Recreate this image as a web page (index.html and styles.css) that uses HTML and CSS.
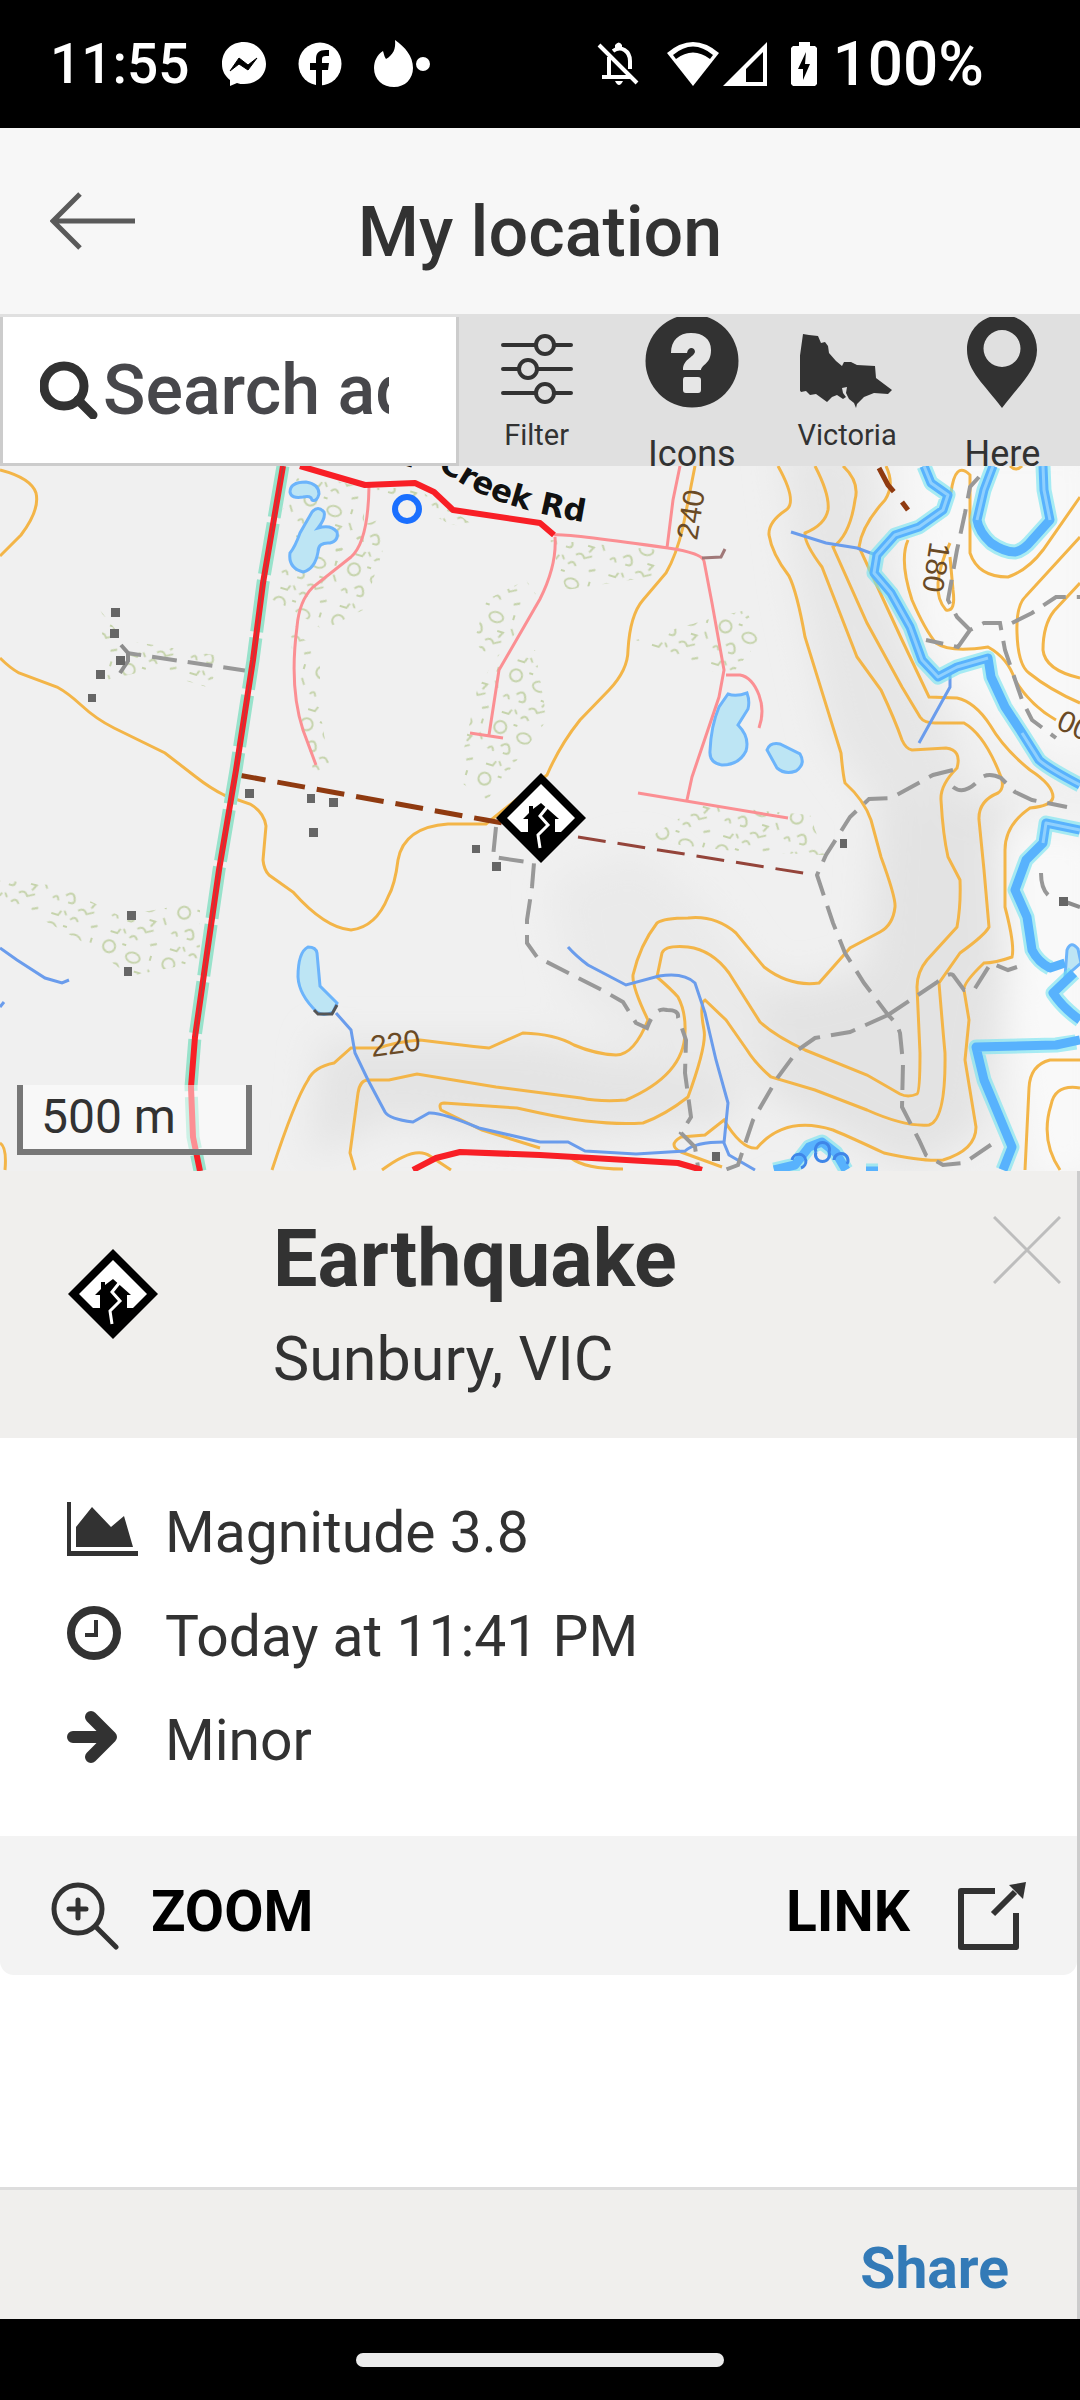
FILE: index.html
```html
<!DOCTYPE html>
<html lang="en">
<head>
  <meta charset="UTF-8" />
  <meta name="viewport" content="width=device-width, initial-scale=1" />
  <title>My location</title>
  <link rel="stylesheet" href="styles.css">
</head>
<body>

  <div class="statusbar">
    <div class="status-left">
      <span class="clock">11:55</span>
      <svg width="44" height="44" viewBox="0 0 44 44" aria-hidden="true">
        <path d="M22 0C9 0 0 9 0 22c0 7 3 12 8 16v6l7-3c2 1 5 1 7 1 13 0 22-9 22-20S35 0 22 0z" fill="#fff"/>
        <path d="M8 29l9-13 9 7 9-7-9 12-9-6z" fill="#000" stroke="#000" stroke-width="1" stroke-linejoin="round"/>
      </svg>
      <svg width="44" height="44" viewBox="0 0 44 44" aria-hidden="true">
        <circle cx="22" cy="22" r="21.500" fill="#fff"/>
        <path d="M18 44V28h-6v-7h6v-4c0-6 3-9 10-9h3v6h-3c-3 0-4 1-4 3v4h7l-1 7h-6v16z" fill="#000"/>
      </svg>
      <svg width="58" height="48" viewBox="0 0 58 48" aria-hidden="true">
        <path d="M21 0c10 7 18 16 18 28 0 11-8 19-19 19S0 40 0 28c0-7 3-13 9-17 1 3 1 5 3 8 7-4 10-10 9-19z" fill="#fff"/>
        <circle cx="49" cy="24" r="7" fill="#fff"/>
      </svg>
    </div>
    <div class="status-right">
      <svg class="bell" width="42" height="44" viewBox="0 0 42 44" aria-hidden="true">
        <g fill="none" stroke="#fff" stroke-width="4">
          <path d="M12 15v18M5 35h28M16 9c8-6 17 0 17 10v8M2 3l38 38"/>
        </g>
        <path d="M18 8V3q4-5 7 0v5zM18 39h8q-4 8-8 0z" fill="#fff"/>
      </svg>
      <svg width="52" height="44" viewBox="0 0 52 44" aria-hidden="true">
        <path d="M0 11Q26-11 52 11L26 44z" fill="#fff"/>
        <path d="M6 13Q26-4 46 13l-3 4Q26 4 9 17z" fill="#000"/>
      </svg>
      <svg width="44" height="44" viewBox="0 0 44 44" aria-hidden="true">
        <path d="M44 0v44H0zM40 10L23 27v13h17z" fill="#fff" fill-rule="evenodd"/>
      </svg>
      <svg class="battery" width="26" height="44" viewBox="0 0 26 44" aria-hidden="true">
        <path d="M8 0h11v4h5l2 2v36l-2 2H2l-2-2V6l2-2h6z" fill="#fff"/>
        <path d="M15 10L7 27h5v11l7-16h-5z" fill="#000"/>
      </svg>
      <span class="charge">100%</span>
    </div>
  </div>

  <header class="header">
    <button type="button" class="back" aria-label="Back">
      <svg width="86" height="58" viewBox="0 0 86 58"><path d="M30 2L3 29l27 27M3 29h82" fill="none" stroke="#5a5a5a" stroke-width="5"/></svg>
    </button>
    <h1>My location</h1>
  </header>

  <div class="toolbar">
    <form class="search">
      <label for="address" aria-label="Search address">
        <svg width="58" height="58" viewBox="0 0 58 58"><circle cx="24" cy="25" r="20" fill="none" stroke="#323232" stroke-width="9"/><path d="M38 39l15 15" stroke="#323232" stroke-width="9" stroke-linecap="round"/></svg>
      </label>
      <input type="text" id="address" placeholder="Search address">
    </form>
    <nav class="tools">
      <button type="button" class="tool small">
        <svg width="72" height="74" viewBox="0 0 72 74">
          <g fill="none" stroke="#323232" stroke-width="4" stroke-linecap="round">
            <path d="M2 11h33M54 11h16M2 35h15M36 35h34M2 59h33M54 59h16"/>
            <circle cx="44" cy="11" r="9"/><circle cx="27" cy="35" r="9"/><circle cx="44" cy="59" r="9"/>
          </g>
        </svg>
        <span>Filter</span>
      </button>
      <button type="button" class="tool">
        <svg width="94" height="91" viewBox="0 3 94 91">
          <circle cx="47" cy="47" r="46.500" fill="#323232"/>
          <path d="M26 39c0-13 8-20 20-20s20 6 20 17c0 14-9 14-10 20H38c0-11 10-12 12-18 0-5-7-6-8 1zM40 63h13q3 0 3 3v10q0 3-3 3H41q-3 0-3-3V66q0-3 2-3z" fill="#e6e6e6"/>
        </svg>
        <span>Icons</span>
      </button>
      <button type="button" class="tool small">
        <svg width="94" height="74" viewBox="0 0 94 74">
          <path d="M3 0l6 1 9 1 3 7 4-1 3 4 1 7 7 8 6 5 2-4h7l6 3 18 1 1 12 8 6 8 6-4 4-14-1-10 4-7 7-1 4-2-5-5-4-3-6 1-6-5 1 1 5 3 4-3 2-6-4-5 2-5 5-11-8-6 1-4-4-5 1-5-8z" fill="#323232"/>
        </svg>
        <span>Victoria</span>
      </button>
      <button type="button" class="tool">
        <svg width="70" height="91" viewBox="0 2 70 91">
          <path d="M35 0C15 0 0 15 0 35c0 21 18 35 35 58 17-23 35-37 35-58C70 15 55 0 35 0zm0 15a18 18 0 1 1 0 37 18 18 0 0 1 0-37z" fill="#323232" fill-rule="evenodd"/>
        </svg>
        <span>Here</span>
      </button>
    </nav>
  </div>

  <main class="map">
    <svg class="tiles" viewBox="0 466 1080 705" preserveAspectRatio="xMidYMid slice" role="img" aria-label="Map of the area around Sunbury">
      <defs>
        <filter id="soft" x="-20%" y="-20%" width="140%" height="140%"><feGaussianBlur stdDeviation="18"/></filter>
        <pattern id="scrub" width="62" height="54" patternUnits="userSpaceOnUse" patternTransform="rotate(17)">
          <g fill="none" stroke="#c5d3ab" stroke-width="2">
            <circle cx="9" cy="9" r="6"/>
            <ellipse cx="35" cy="13" rx="7" ry="5"/>
            <path d="M15 27q6-7 9 0t-5 6M40 26h6l-3 6M3 33q4-6 6 1M31 38q5-5 9 1l7-4M21 3h4M52 6v5M6 48h7l2-5M26 49q4-6 8 0M48 50l6-3M53 20l4 6M18 42l3 4"/>
          </g>
        </pattern>
        <path id="creekRoad" d="M306 446Q415 452 456 480T584 522"/>
        <!-- house and crack warning diamond, 90 x 90 -->
        <symbol id="quake" viewBox="0 0 90 90">
          <path d="M45 0l45 45-45 45L0 45z" fill="#000"/>
          <path d="M45 11l34 34-14 14H25L11 45z" fill="#fff"/>
          <path d="M27 46l6-6v-7h4v3l8-6 18 16h-4v13H32V46z" fill="#000"/>
          <path d="M52 33l-8 10 8 9-10 10 2 13" fill="none" stroke="#fff" stroke-width="3"/>
        </symbol>
      </defs>

      <rect x="0" y="466" width="1080" height="705" fill="#f0f0f0"/>

      <!-- hill shading -->
      <g filter="url(#soft)">
        <path d="M780 440h90l10 130 70 160 20 70-80 20-60-80-30-150z" fill="#e6e6e6"/>
        <path d="M880 800h130v160l-30 170-70 40-150-80-60-140 90 40 80-20z" fill="#e3e3e3"/>
        <path d="M320 1040l220 0 100 20 90-20 10 80-200 20-150-20-80 40z" fill="#e4e4e4"/>
        <path d="M550 880l90-30 70 60 50 70 10 100-110-10-90-80z" fill="#eaeaea"/>
        <path d="M900 440h200v330l-90-30-90-90z" fill="#f8f8f8"/>
        <path d="M1000 830h100v350h-70l-20-160z" fill="#f9f9f9"/>
      </g>

      <!-- scrub -->
      <g fill="url(#scrub)">
        <path d="M300 472l65 16 50 0 40 24 25 18-30-6-60-30-26 6 0 50-30 14-58-40z"/>
        <path d="M270 570l48-30 60-20 5 30-20 60-40 20-30-20-28-14z"/>
        <path d="M486 600l40-20 14 20-46 62-20-20z"/>
        <path d="M495 660l40-10 12 70-60 80-30-20 20-90z"/>
        <path d="M550 540l110 10-4 26-90 14z"/>
        <path d="M636 640l70-20 40-10 14 30-30 36-44-12z"/>
        <path d="M100 610l24 30 96 16-10 32-60-18-44 10z"/>
        <path d="M0 880l60 6 60 30 80-14 0 60-70 14-40-30-90-50z"/>
        <path d="M700 805l110 10 14 40-90-4-90-10z"/>
        <path d="M290 630l30 20 0 60 10 60-16 4-18-80z"/>
      </g>

      <!-- contours -->
      <g class="contour">
        <path d="M0 470Q31 478 36 493 40 510 21 535L0 556"/>
        <path d="M0 658Q10 668 19 673L57 687Q68 693 81 705 96 719 114 728L165 753 196 777Q210 788 224 795L250 804Q264 812 266 826L263 860Q264 870 269 875L293 892Q325 928 351 930 376 927 388 897 395 885 398 860 404 827 448 824H486L547 775Q560 745 580 720L609 690Q628 670 628 650 630 615 643 600L666 573Q676 556 683 527L695 466"/>
        <path d="M778 466Q798 502 786 510 768 522 769 535 772 554 789 576 797 592 805 637L841 753Q843 775 845 783 864 800 871 820L881 857Q896 898 895 907 893 925 880 932L850 948 819 983Q790 987 764 967L736 933Q715 915 688 918 664 918 657 923 640 945 633 975 632 987 648 1020 634 1055 616 1055 595 1054 574 1045 555 1034 523 1033L489 1048Q460 1045 420 1040 395 1042 379 1048H351L334 1063Q314 1067 308 1080 295 1100 272 1170"/>
        <path d="M815 466Q830 495 828 510 825 525 805 533 804 543 822 567L857 657 881 690Q895 720 902 740 906 749 912 750L946 748Q962 750 957 768 940 785 941 800 943 835 948 857L960 880Q961 905 957 927L927 960Q917 972 917 987L920 1053Q920 1092 917 1094 908 1098 900 1094L867 1075 805 1050Q775 1036 760 1022L729 973Q712 950 688 947 665 945 662 953L657 977Q672 990 678 997 686 1012 685 1033 684 1075 626 1100 600 1102 581 1098L496 1087 417 1074 389 1080H368Q360 1080 358 1093L350 1153 355 1170"/>
        <path d="M843 466Q860 482 855 500 850 535 833 547L867 623 902 687 920 717Q924 723 935 723H964Q985 735 1001 777 1005 788 998 793 978 801 979 820L984 870 989 927Q985 935 960 953L939 983Q942 1020 945 1053 946 1120 929 1125 905 1127 867 1110L815 1090 771 1077Q755 1063 747 1050L726 1020 705 1000Q699 1003 704 1030 707 1045 688 1097 665 1115 643 1123 600 1126 540 1113L517 1108 444 1103Q438 1103 441 1110L482 1130 540 1148"/>
        <path d="M886 466Q895 485 885 500 862 525 859 547L902 640 929 697 957 698Q975 702 990 725 1004 749 1030 770 1053 785 1053 797 1052 806 1030 808 1005 825 1005 850V907Q1015 945 1012 957 995 963 984 963 963 983 964 990L969 1020 965 1060 976 1127Q976 1150 943 1160 925 1162 884 1153 850 1137 833 1130 785 1115 757 1148 742 1150 724 1120L705 1135 681 1137Q667 1145 681 1152L722 1167"/>
        <path d="M908 540Q899 560 912 600 925 630 936 643 950 653 988 647 1008 658 1015 680 1030 705 1056 720"/>
        <path d="M950 543Q928 590 946 610 956 612 953 590L950 557"/>
        <path d="M951 493Q955 460 970 475V553Q978 577 1008 577 1028 570 1043 550L1080 497"/>
        <path d="M1080 537L1026 596Q1016 605 1017 633 1018 665 1029 673 1050 690 1080 703"/>
        <path d="M1080 583L1054 611Q1043 625 1043 650 1045 670 1080 678"/>
        <path d="M1080 1060H1050Q1030 1065 1029 1088L1025 1170M1080 1088Q1055 1084 1051 1105 1040 1140 1060 1170M0 1143Q7 1147 5 1170M382 1170Q415 1145 430 1156L451 1170M571 1158Q585 1169 623 1169M1010 466q6 6 12 0"/>
      </g>

      <!-- lakes and streams -->
      <g class="lake">
        <path d="M290 492Q290 482 306 482 319 484 319 494 317 502 312 500 311 495 303 497 291 499 290 492z"/>
        <path d="M312 512Q318 505 324 512 326 518 318 528 331 524 337 532 339 541 330 543 318 542 318 552 315 569 303 572 288 568 290 553 295 547 300 533z"/>
        <path d="M728 694q8 3 19-1 3 8 1 16l-10 16q12 12 8 26-7 14-24 14-13-2-12-14 1-25 9-44z"/>
        <path d="M767 750q3-8 13-6l20 10q6 10-4 17-11 4-19-3z"/>
        <path d="M308 947q8 0 9 6l3 33 17 17-4 9q-10 5-16 0-18-17-19-35 0-25 10-30z"/>
        <path d="M1067 950q4-10 11-1l3 14-16 14z"/>
      </g>
      <path d="M314 1010l4 4h14l5-9" fill="none" stroke="#555" stroke-width="3"/>
      <g class="stream">
        <path d="M336 1013l15 17 4 23 13 27 17 32q4 7 28 10l16-9q12-1 50 15l61 14h28l17 9 51 3 49-3q10-9 39-9"/>
        <path d="M568 947q8 9 20 18l38 20 33-9q25-4 36 7l10 30 11 47 12 43-4 40 5 12 26 15"/>
        <path d="M0 948l17 12 28 18 17 5 7-3M0 1007l4-5M791 532l35 11 31 5 19 7M950 670v17l-31 56"/>
      </g>

      <!-- river -->
      <g class="river">
        <g class="bank">
          <path d="M924 466l7 17 17 12-5 15-24 17-24 8-18 20-3 18 17 20 19 34 12 33 16 17 19-10 31-9 3 19 14 30 17 26 17 27q10 9 41 25M993 466l-9 24-7 30q2 12 14 23 13 9 24 9 9-2 17-12l18-20-6-30-1-24"/>
          <path d="M1080 830l-34-7-3 20-17 17-11 30 12 27 5 33q6 12 18 18M1074 973l-21 20q10 15 27 27M1076 1042l-20 3-80 2 8 33 28 67-9 23M774 1170l21-5 14-18 13-5 14 11 10 17M866 1171h12"/>
        </g>
        <g class="water">
          <path d="M924 466l7 17 17 12-5 15-24 17-24 8-18 20-3 18 17 20 19 34 12 33 16 17 19-10 31-9 3 19 14 30 17 26 17 27q10 9 41 25M993 466l-9 24-7 30q2 12 14 23 13 9 24 9 9-2 17-12l18-20-6-30-1-24"/>
          <path d="M1080 830l-34-7-3 20-17 17-11 30 12 27 5 33q6 12 18 18l15-5M1074 973l-21 20q10 15 27 27M1080 1040l-24 5-80 2 8 33 28 67-9 23M774 1170l21-5 14-18 13-5 14 11 10 17M866 1171h12"/>
        </g>
        <path class="ripple" d="M924 466l7 17 17 12-5 15-24 17-24 8-18 20-3 18 17 20 19 34 12 33 16 17 19-10 31-9M1022 733l17 27q10 9 41 25M993 466l-9 24-7 30M1050 520l-6-30-1-24M1080 830l-34-7-3 20"/>
        <path class="pool" d="M792 1160a7 7 0 1 1 9 8M816 1152a7 7 0 1 1 13 0 7 7 0 1 1-13 0M834 1160a7 7 0 1 1 13 4"/>
      </g>

      <!-- walking tracks -->
      <g class="track">
        <path d="M248 671l-121-18"/>
        <path d="M496 827l-3 30 41 6-2 24-5 33v23l10 14 65 33 21 12 13 21 11 5q8-22 20-18 12 0 11 7l8 23-1 33 6 44-10 16 14 14 3 20"/>
        <path d="M953 770l-20 5-42 23-22 1-19 18-24 38-9 20 16 48 12 30 19 30 24 32q9 8 12 18l3 30-1 44 17 33 7 15 17 10 21-2 31-21"/>
        <path d="M888 1015l48-32q12-11 17-8l11 15h10l17-27 17 7 9-3M888 1015l-38 17-35 6-17 12-20 27-25 43-10 30-5 15-16 6"/>
        <path d="M979 477l-9 10-5 26-8 37-9 50 9 17 13 13 14-7h16l5 27 17 50 10 20 24 18M970 630l-12 17-32-7M1012 623l20-10 24-16h24"/>
        <path d="M953 787q10 8 23-4 9-13 25-5l14 14 17 8 35 7M1041 873q0 15 7 22"/>
      </g>
      <path d="M121 645l7 8v8l-8 12M1063 901l17 6" fill="none" stroke="#8c8c8c" stroke-width="4"/>
      <g class="dirt">
        <path d="M238 775l248 45 55 10"/>
        <path class="thin" d="M578 837l231 37"/>
        <path d="M879 468l9 17 7 8M902 502l6 8"/>
      </g>

      <!-- roads -->
      <g class="lane">
        <path d="M554 535q8-2 114 13 34 5 36 13l8 42 12 67-5 27-27 80-5 23M638 793l150 25M726 675h14q12 2 19 20 6 16 0 33M667 548l6-48 7-34"/>
        <path d="M555 537q2 28-15 62l-41 71-10 65M470 733l33 5M369 487q-1 55-18 70l-38 30q-14 14-16 40-8 60 6 103l13 35"/>
      </g>
      <path d="M702 558l19-1 4-8" fill="none" stroke="#a07878" stroke-width="3"/>
      <path d="M283 466l-20 117-10 77-17 110-17 100-12 83-12 84-4 50 2 50 7 34" fill="none" stroke="#98e2cb" stroke-width="13" stroke-dasharray="52 6"/>
      <g class="road">
        <path d="M283 466l-20 117-10 77-17 110-17 100-12 83-12 84-4 50 2 50 7 34"/>
        <path d="M300 466l65 19 50-2 19 9 19 18 87 13 14 12M413 1170l23-12 24-6 80 3 138 8 24 7"/>
      </g>
      <path d="M283 466l-20 117-10 77-17 110-17 100-12 83-12 84" fill="none" stroke="#9c4a4a" stroke-width="1"/>
      <circle cx="407" cy="509" r="12" fill="#f0f0f0" stroke="#1a6fff" stroke-width="6"/>

      <!-- buildings -->
      <path class="building" d="M111 608h9v9h-9zM110 629h9v9h-9zM116 656h9v9h-9zM96 670h9v9h-9zM88 694h8v8h-8zM245 789h9v9h-9zM307 794h8v9h-8zM329 798h9v9h-9zM309 828h9v9h-9zM472 845h8v8h-8zM492 862h9v9h-9zM127 911h9v9h-9zM124 967h8v9h-8zM840 839h7v9h-7zM712 1152h8v9h-8zM1059 897h9v9h-9z"/>

      <text class="road-name"><textPath href="#creekRoad" startOffset="100%">Deep Creek Rd</textPath></text>
      <g class="height">
        <text x="0" y="0" transform="translate(697 541) rotate(-81)">240</text>
        <text x="0" y="0" transform="translate(930 541) rotate(99)">180</text>
        <text x="0" y="0" transform="translate(372 1057) rotate(-8)">220</text>
        <text x="0" y="0" transform="translate(1055 728) rotate(24)">00</text>
      </g>

      <use href="#quake" x="496" y="773" width="90" height="90"/>
    </svg>
    <div class="scale">500 m</div>
  </main>

  <section class="panel">
    <div class="panel-head">
      <svg class="panel-icon" width="90" height="90" aria-hidden="true"><use href="#quake"/></svg>
      <div class="panel-title">
        <h2>Earthquake</h2>
        <p>Sunbury, VIC</p>
      </div>
      <button type="button" class="close" aria-label="Close">
        <svg width="68" height="68" viewBox="0 0 68 68"><path d="M1 1l66 66M67 1L1 67" stroke="#bdbdbd" stroke-width="3"/></svg>
      </button>
    </div>

    <ul class="details">
      <li>
        <svg width="71" height="54" viewBox="0 0 71 54" aria-hidden="true"><path d="M0 0h4v49h67v5H0zM9 25L25 5l19 20 13-11 9 31H9z" fill="#323232"/></svg>
        Magnitude 3.8
      </li>
      <li>
        <svg width="54" height="54" viewBox="0 0 54 54" aria-hidden="true"><circle cx="27" cy="27" r="23" fill="none" stroke="#323232" stroke-width="8"/><path d="M29 14v15H18" fill="none" stroke="#323232" stroke-width="4"/></svg>
        Today at 11:41 PM
      </li>
      <li>
        <svg width="54" height="54" viewBox="0 0 54 54" aria-hidden="true"><path d="M6 27h34M24 7l20 20-20 20" fill="none" stroke="#323232" stroke-width="12" stroke-linecap="round" stroke-linejoin="round"/></svg>
        Minor
      </li>
    </ul>

    <div class="actions">
      <button type="button">
        <svg width="68" height="68" viewBox="0 0 68 68"><g fill="none" stroke="#323232" stroke-width="5" stroke-linecap="round"><circle cx="27" cy="27" r="24"/><path d="M45 45l20 20M18 27h17M27 18v18"/></g></svg>
        ZOOM
      </button>
      <a href="#link">
        LINK
        <svg width="68" height="68" viewBox="0 0 68 68"><path d="M37 9H3v56h55V31" fill="none" stroke="#323232" stroke-width="6" stroke-linejoin="round"/><path d="M35 32l22-22" stroke="#323232" stroke-width="6"/><path d="M51 3l17-3-3 17z" fill="#323232"/></svg>
      </a>
    </div>

    <footer class="panel-foot">
      <a href="#share">Share</a>
    </footer>
  </section>

  <div class="navbar"><span></span></div>

</body>
</html>
```

FILE: styles.css
```css
* {
  box-sizing: border-box;
}

body {
  margin: 0;
  min-height: 100vh;
  display: flex;
  flex-direction: column;
  background-color: #fff;
  font-family: Roboto, 'Liberation Sans', sans-serif;
  color: #323232;
}

h1, h2, p, ul {
  margin: 0;
  padding: 0;
}

svg {
  display: block;
  flex: none;
}

button {
  padding: 0;
  border: none;
  background: none;
  font: inherit;
  color: inherit;
  cursor: pointer;
}

a {
  text-decoration: none;
}

/* phone status bar */
.statusbar {
  display: flex;
  justify-content: space-between;
  align-items: center;
  height: 128px;
  padding: 0 96px 0 50px;
  background-color: #000;
  color: #fff;
}

.status-left,
.status-right {
  display: flex;
  align-items: center;
  font-weight: 500;
  line-height: 64px;
}

.status-left {
  gap: 32px;
}

.status-right {
  gap: 4px;
}

.clock {
  font-size: 55px;
}

.charge {
  font-size: 62px;
}

.bell {
  margin-right: 24px;
}

.battery {
  margin: 0 12px 0 20px;
}

/* header */
.header {
  display: grid;
  grid-template-columns: 136px 1fr 136px;
  align-items: center;
  height: 189px;
  border-bottom: 3px solid #e0e0e0;
  background-color: #f7f7f7;
}

.back {
  justify-self: end;
}

.header h1 {
  padding-top: 22px;
  font-size: 70px;
  font-weight: 500;
  line-height: 80px;
  text-align: center;
}

/* search and tools */
.toolbar {
  display: flex;
  height: 149px;
  background-color: #e0e0e0;
}

.search {
  display: flex;
  align-items: center;
  gap: 5px;
  width: 459px;
  padding: 0 67px 0 37px;
  border: 3px solid #ccc;
  border-top: none;
  background-color: #fff;
}

.search input {
  flex: 1;
  min-width: 0;
  padding: 0;
  border: none;
  outline: none;
  background: none;
  font: 500 70px Roboto, 'Liberation Sans', sans-serif;
  color: #47474b;
}

.search input::placeholder {
  color: #47474b;
  opacity: 1;
}

.tools {
  flex: 1;
  display: grid;
  grid-template-columns: repeat(4, 1fr);
  align-items: start;
}

.tool {
  display: flex;
  flex-direction: column;
  align-items: center;
  gap: 31px;
  font-size: 36px;
  line-height: 30px;
}

.tool.small {
  gap: 12px;
  padding-top: 17px;
  font-size: 29px;
}

/* map */
.map {
  position: relative;
  flex: 1;
  min-height: 400px;
  overflow: hidden;
}

.tiles {
  position: absolute;
  width: 100%;
  height: 100%;
}

.contour path {
  fill: none;
  stroke: #f3b548;
  stroke-width: 3;
}

.lake path {
  fill: #bde5f4;
  stroke: #6cb4fb;
  stroke-width: 3;
}

.stream path {
  fill: none;
  stroke: #6a9cec;
  stroke-width: 3;
}

.river path {
  fill: none;
  stroke-linejoin: round;
}

.bank path {
  stroke: #6fe3f0;
  stroke-width: 15;
  opacity: 0.6;
}

.water path {
  stroke: #58b2fd;
  stroke-width: 9;
}

.river .ripple {
  stroke: #8fd0fd;
  stroke-width: 3;
}

.river .pool {
  stroke: #3f86e8;
  stroke-width: 3;
}

.track path {
  fill: none;
  stroke: #989898;
  stroke-width: 4;
  stroke-dasharray: 25 11;
}

.dirt path {
  fill: none;
  stroke: #8f3a10;
  stroke-width: 5;
  stroke-dasharray: 28 12;
}

.dirt .thin {
  stroke: #94443a;
  stroke-width: 3;
}

.lane path {
  fill: none;
  stroke: #fb8f93;
  stroke-width: 3;
}

.road path {
  fill: none;
  stroke: #f81f26;
  stroke-width: 6;
  stroke-linejoin: round;
}

.building {
  fill: #666;
}

.road-name {
  font: bold 31px 'DejaVu Sans', sans-serif;
  text-anchor: end;
  fill: #111;
  stroke: #f4f4f4;
  stroke-width: 2;
  paint-order: stroke;
}

.height {
  font: 30px 'Liberation Sans', sans-serif;
  fill: #6a4a25;
}

.scale {
  position: absolute;
  left: 17px;
  bottom: 16px;
  width: 235px;
  padding: 6px 18px;
  border: 6px solid #777;
  border-top: none;
  background-color: rgba(255, 255, 255, 0.5);
  font-size: 48px;
  line-height: 52px;
}

/* incident panel */
.panel {
  border-right: 3px solid #ccc;
}

.panel-head {
  display: flex;
  align-items: flex-start;
  padding: 40px 16px 26px 68px;
  background-color: #f0efed;
}

.panel-icon {
  margin-top: 38px;
}

.panel-title {
  flex: 1;
  padding-left: 115px;
}

.panel-title h2 {
  font-size: 79px;
  font-weight: 700;
  line-height: 96px;
}

.panel-title p {
  font-size: 61px;
  line-height: 105px;
}

.close {
  margin-top: 5px;
}

.details {
  padding: 43px 67px;
  list-style: none;
}

.details li {
  display: grid;
  grid-template-columns: 98px 1fr;
  align-items: center;
  font-size: 57px;
  line-height: 104px;
}

.details svg {
  margin-bottom: 8px;
}

.actions {
  display: flex;
  justify-content: space-between;
  height: 139px;
  padding: 12px 51px 0;
  border-radius: 0 0 14px 14px;
  background-color: #f3f3f3;
}

.actions button,
.actions a {
  display: flex;
  align-items: center;
  font-size: 57px;
  font-weight: 700;
  color: #000;
}

.actions button {
  gap: 32px;
}

.actions a {
  gap: 48px;
}

.actions svg {
  margin-top: 8px;
}

.panel-foot {
  display: flex;
  justify-content: flex-end;
  margin-top: 212px;
  padding: 28px 68px 0;
  border-top: 3px solid #ddd;
  background-color: #f0efed;
}

.panel-foot a {
  font-size: 57px;
  font-weight: 700;
  line-height: 101px;
  color: #337ab7;
}

/* gesture bar */
.navbar {
  display: flex;
  justify-content: center;
  align-items: center;
  height: 81px;
  background-color: #000;
}

.navbar span {
  width: 34%;
  height: 14px;
  border-radius: 7px;
  background-color: #ebebeb;
}
```
